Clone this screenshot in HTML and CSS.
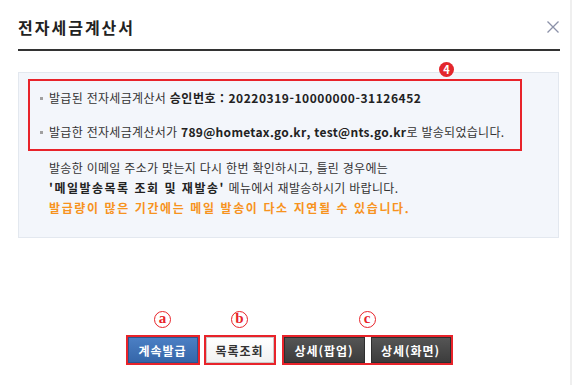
FILE: index.html
```html
<!DOCTYPE html>
<html lang="ko">
<head>
<meta charset="utf-8">
<title>전자세금계산서</title>
<link rel="stylesheet" href="styles.css">
</head>
<body>
<div class="dialog">
  <header class="header">
    <h1 class="title">전자세금계산서</h1>
    <span class="close" aria-label="닫기">
      <svg width="12" height="12" viewBox="0 0 12 12"><path d="M0.5 0.5 L11.5 11.5 M11.5 0.5 L0.5 11.5" stroke="#8b91a8" stroke-width="1.3" fill="none"/></svg>
    </span>
  </header>

  <section class="info">
    <span class="badge">4</span>
    <ul class="result">
      <li class="row">발급된 전자세금계산서 <b class="wide">승인번호 : 20220319-10000000-31126452</b></li>
      <li class="row">발급한 전자세금계산서가 <b>789@hometax.go.kr, test@nts.go.kr</b>로 발송되었습니다.</li>
    </ul>
    <div class="notes">
      <p class="note">발송한 이메일 주소가 맞는지 다시 한번 확인하시고, 틀린 경우에는</p>
      <p class="note"><b class="spaced">'메일발송목록 조회 및 재발송'</b> 메뉴에서 재발송하시기 바랍니다.</p>
      <p class="note warn">발급량이 많은 기간에는 메일 발송이 다소 지연될 수 있습니다.</p>
    </div>
  </section>

  <div class="actions">
    <div class="group">
      <span class="mark">a</span>
      <div class="frame"><button class="btn btn-blue w-a">계속발급</button></div>
    </div>
    <div class="group">
      <span class="mark">b</span>
      <div class="frame"><button class="btn btn-white w-b">목록조회</button></div>
    </div>
    <div class="group">
      <span class="mark">c</span>
      <div class="frame split">
        <button class="btn btn-dark w-c1">상세(팝업)</button>
        <button class="btn btn-dark w-c2">상세(화면)</button>
      </div>
    </div>
  </div>
</div>
<div class="edge"></div>
</body>
</html>
```

FILE: styles.css
```css
* { box-sizing: border-box; }
html, body { margin: 0; padding: 0; background: #fff; }
body {
  font-family: "Noto Sans CJK KR", "Noto Sans", sans-serif;
  font-size: 12px;
  color: #333;
  width: 580px;
  height: 385px;
  overflow: hidden;
  position: relative;
}
.dialog {
  margin-left: 18px;
  width: 542px;
}
.header {
  display: flex;
  align-items: center;
  justify-content: space-between;
  padding-top: 16px;
  padding-bottom: 11px;
  border-bottom: 2px solid #333;
}
.title {
  margin: 0;
  font-size: 16px;
  line-height: 22px;
  font-weight: 700;
  letter-spacing: 2px;
  color: #222;
}
.close {
  display: flex;
  margin-right: 1px;
  margin-top: -1px;
}
.info {
  position: relative;
  margin-top: 21px;
  width: 541px;
  height: 166px;
  background: #f3f6fb;
  border: 1px solid #e3e8ef;
  padding: 6px 0 0 9px;
  letter-spacing: 0.3px;
}
.badge {
  position: absolute;
  left: 420px;
  top: -11px;
  width: 15px;
  height: 15px;
  border-radius: 50%;
  background: #e3262c;
  color: #fff;
  font-size: 11px;
  font-weight: 700;
  line-height: 15px;
  text-align: center;
  letter-spacing: 0;
}
.result {
  list-style: none;
  margin: 0;
  width: 494px;
  border: 2px solid #e8232a;
  padding: 7px 0 7px 10px;
  display: flex;
  flex-direction: column;
  gap: 14px;
}
.row {
  line-height: 20px;
  white-space: nowrap;
}
.row::before {
  content: "";
  display: inline-block;
  vertical-align: middle;
  width: 3px;
  height: 3px;
  background: #a0a0a0;
  margin-right: 6px;
  margin-top: -2px;
}
.row b { color: #222; font-weight: 700; }
.row .wide { letter-spacing: 0.55px; }
.notes {
  padding: 7px 0 0 21px;
}
.note {
  margin: 0;
  line-height: 20px;
  white-space: nowrap;
}
.spaced { color: #222; letter-spacing: 1.5px; }
.warn {
  color: #f7931e;
  font-weight: 700;
  letter-spacing: 1.6px;
}
.actions {
  margin-top: 73px;
  display: flex;
  justify-content: center;
  align-items: flex-end;
  gap: 4px;
}
.group {
  display: flex;
  flex-direction: column;
  align-items: center;
  gap: 7px;
}
.group:last-child { margin-left: 2px; }
.mark {
  width: 17px;
  height: 17px;
  border: 1.5px solid #e8232a;
  border-radius: 50%;
  color: #e8232a;
  font-family: "Liberation Serif", serif;
  font-weight: 700;
  font-size: 15px;
  line-height: 12px;
  text-align: center;
}
.frame {
  display: flex;
  border: 2px solid #e8232a;
  background: #fff;
}
.split { gap: 6px; }
.btn {
  height: 26px;
  margin: 0;
  padding: 0;
  font-family: "Noto Sans CJK KR", "Noto Sans", sans-serif;
  font-size: 12px;
  font-weight: 700;
  letter-spacing: 1px;
  cursor: pointer;
}
.btn-blue {
  color: #fff;
  background: linear-gradient(#4b7fc4, #3566a9);
  border: 1px solid #2b5590;
}
.btn-white {
  color: #333;
  background: linear-gradient(#ffffff, #f1f1f1);
  border: 1px solid #c9c9c9;
}
.btn-dark {
  color: #fff;
  background: linear-gradient(#555, #3c3c3c);
  border: 1px solid #2e2e2e;
}
.w-a { width: 70px; }
.w-b { width: 68px; }
.w-c1 { width: 81px; }
.w-c2 { width: 80px; }
.edge {
  position: absolute;
  left: 570px;
  top: 0;
  width: 2px;
  height: 385px;
  background: #efefef;
}
```
